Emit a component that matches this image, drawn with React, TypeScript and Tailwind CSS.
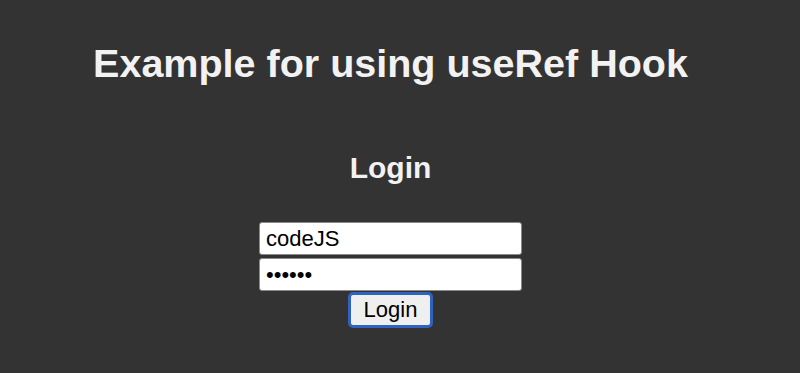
import React from "react";

function App() {
  return (
    <div className="min-h-[373px] w-[800px] bg-[#333333] font-['Liberation_Sans',Arial,sans-serif] text-[#f2f2f2]">
      <div className="flex w-[781px] flex-col items-center pt-[40px]">
        <h1 className="text-[39.5px] leading-[46px] font-bold">Example for using useRef Hook</h1>
        <h2 className="mt-[64px] text-[30px] leading-[35px] font-bold">Login</h2>
        <form className="mt-[37px] flex flex-col items-center">
          <input
            type="text"
            defaultValue="codeJS"
            className="h-[33px] w-[263px] rounded-[3px] border border-[#8a8a8a] bg-white px-[6px] text-[22px] text-black outline-none"
          />
          <input
            type="password"
            defaultValue="123456"
            className="mt-[3px] h-[33px] w-[263px] rounded-[3px] border border-[#8a8a8a] bg-white px-[6px] text-[22px] text-black outline-none"
          />
          <button
            type="button"
            className="mt-[1px] h-[36px] w-[85px] rounded-[5px] border-[3px] border-[#2e63c0] bg-[#efefef] text-[22px] leading-none text-black"
          >
            Login
          </button>
        </form>
      </div>
    </div>
  );
}

export default App;
